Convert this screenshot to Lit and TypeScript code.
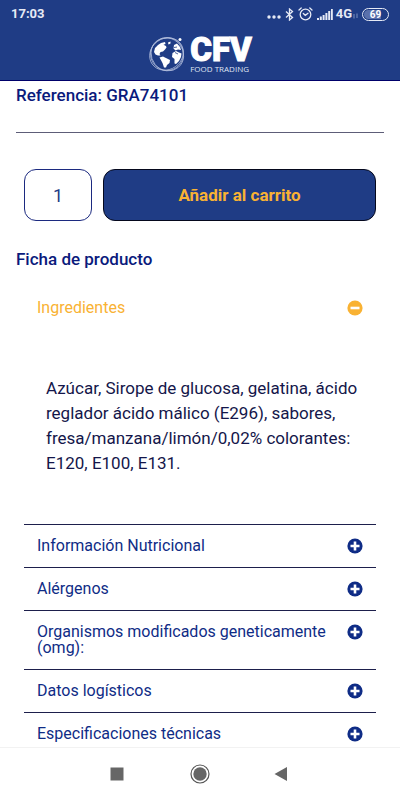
import { LitElement, html, css, svg, nothing } from "lit";
import { customElement, state } from "lit/decorators.js";
import { classMap } from "lit/directives/class-map.js";

interface Section {
  title: string;
  body: string;
}

const SECTIONS: Section[] = [
  {
    title: "Ingredientes",
    body: "Azúcar, Sirope de glucosa, gelatina, ácido reglador ácido málico (E296), sabores, fresa/manzana/limón/0,02% colorantes: E120, E100, E131.",
  },
  { title: "Información Nutricional", body: "" },
  { title: "Alérgenos", body: "" },
  { title: "Organismos modificados geneticamente (omg):", body: "" },
  { title: "Datos logísticos", body: "" },
  { title: "Especificaciones técnicas", body: "" },
];

@customElement("status-bar")
class StatusBar extends LitElement {
  static styles = css`
    :host {
      display: flex;
      align-items: center;
      justify-content: space-between;
      height: 28px;
      padding: 0 11px;
      color: #e6eaf5;
      font: 700 13px/16px Roboto, sans-serif;
    }
    .icons {
      display: flex;
      align-items: center;
    }
    svg {
      display: block;
    }
    .dots {
      margin-right: 4px;
    }
    .bt,
    .alarm {
      margin-right: 4px;
    }
    .signal {
      margin-right: 3px;
    }
    .data {
      margin: 4px 4px 0 1px;
    }
    .battery {
      box-sizing: border-box;
      width: 27px;
      height: 13px;
      padding: 1px;
      border: 1px solid #e6eaf5;
      border-radius: 7px;
    }
    .level {
      display: block;
      height: 9px;
      border-radius: 5px;
      background: linear-gradient(90deg, #5a70ab 75%, transparent 75%);
      color: #fff;
      font-size: 10px;
      line-height: 9px;
      text-align: center;
    }
  `;

  render() {
    return html`
      <span>17:03</span>
      <div class="icons">
        <svg class="dots" width="14" height="12" viewBox="0 0 14 12" fill="#e6eaf5">
          <circle cx="2" cy="9" r="1.7" /><circle cx="7" cy="9" r="1.7" /><circle cx="12" cy="9" r="1.7" />
        </svg>
        <svg class="bt" width="9" height="13" viewBox="0 0 9 13" fill="none" stroke="#e6eaf5" stroke-width="1.3">
          <path d="M1 3.5 7.5 9.5 4.5 12V1L7.5 3.5 1 9.5" />
        </svg>
        <svg class="alarm" width="15" height="14" viewBox="0 0 15 14" fill="none" stroke="#e6eaf5" stroke-width="1.3" stroke-linecap="round">
          <circle cx="7.5" cy="7.5" r="5.3" />
          <path d="M1 3 3.2 1M14 3 11.800 1M5.300 6.500 7.300 8.300 10 6.300" />
        </svg>
        <svg class="signal" width="16" height="12" viewBox="0 0 16 12" fill="#e6eaf5">
          <path d="M0 10h2v2H0zM2.800 8.500h2V12h-2zM5.600 7h2v5h-2zM8.400 5h2v7h-2zM11.200 3h2v9h-2zM14 1h1.800v11H14z" />
        </svg>
        <span>4G</span>
        <svg class="data" width="5" height="6" viewBox="0 0 5 6" fill="none" stroke="#7f91c0">
          <path d="M1 5.500V1M4 .5V5" />
        </svg>
        <span class="battery"><span class="level">69</span></span>
      </div>
    `;
  }
}

@customElement("brand-logo")
class BrandLogo extends LitElement {
  static styles = css`
    :host {
      display: flex;
      align-items: center;
      gap: 4px;
      color: #fff;
      font-family: Roboto, sans-serif;
    }
    svg {
      display: block;
    }
    .name {
      display: block;
      font-size: 33px;
      font-weight: 900;
      line-height: 28px;
      -webkit-text-stroke: 1px #fff;
    }
    .tag {
      display: block;
      font: 400 8px/9px "Open Sans", sans-serif;
      color: #dfe4f2;
    }
  `;

  render() {
    return html`
      <svg width="38" height="38" viewBox="0 0 38 38" role="img" aria-label="CFV">
        ${svg`
          <g fill="none" stroke="#b9c4e0" stroke-width=".7">
            <circle cx="19" cy="19" r="16.500" />
            <ellipse cx="18.500" cy="19" rx="17.500" ry="15.500" transform="rotate(-35 18.500 19)" />
            <ellipse cx="19.500" cy="19" rx="17" ry="15.800" transform="rotate(50 19 19)" />
          </g>
          <circle cx="32" cy="4.500" r="1.500" fill="#fff" />
          <g fill="#fff">
            <path d="M6 17 7 13 10 10 13 8 17 7 17.500 9 15.500 9.800 18 11 18.500 12.500 17 14.500 15 16.500 12.500 17 11.500 19 12.500 20.500 10 20.500 7.500 19.500z" />
            <path d="M11.500 22.500 15 21.500 18 23 22 25 21.500 28 19 30 18 32.500 16 32.500 14.500 28z" />
            <path d="M20 7.500 22.500 6.500 22.500 8.500 20.500 9.500z" />
            <path d="M26 10 29 8.500 32 12 33 15 30 14.500 27.500 15.500 25.500 13.500z" />
            <path d="M24.500 18 28 16 31 17.500 33.500 18.500 33 22 31 26 28 29 26.500 28.500 26.500 24 24 22z" />
          </g>
          <path d="M26 12.500 29 12M27 17.500 30 19" stroke="#1f3c85" stroke-width=".8" />
        `}
      </svg>
      <div>
        <span class="name">CFV</span>
        <span class="tag">FOOD TRADING</span>
      </div>
    `;
  }
}

@customElement("product-accordion")
class ProductAccordion extends LitElement {
  @state() private open = new Set<number>([0]);

  static styles = css`
    :host {
      display: block;
      padding: 0 8px;
    }
    .item + .item {
      border-top: 1px solid #1d1f4c;
    }
    h3 {
      margin: 0;
    }
    .head {
      display: flex;
      align-items: flex-start;
      justify-content: space-between;
      gap: 16px;
      width: 100%;
      margin: 0;
      padding: 13px;
      border: 0;
      background: none;
      color: #0f2c86;
      font: 400 16px/16px Roboto, sans-serif;
      text-align: left;
      cursor: pointer;
    }
    .active {
      color: #f9b233;
    }
    .head svg {
      flex: none;
      display: block;
    }
    .body {
      margin: 0;
      padding: 47px 16px 48px 22px;
      color: #14164a;
      font-size: 17px;
      line-height: 25px;
    }
  `;

  private toggle(i: number) {
    const next = new Set(this.open);
    if (!next.delete(i)) next.add(i);
    this.open = next;
  }

  render() {
    return SECTIONS.map((s, i) => {
      const open = this.open.has(i);
      return html`
        <div class="item">
          <h3>
            <button
              class=${classMap({ head: true, active: open })}
              aria-expanded=${open ? "true" : "false"}
              @click=${() => this.toggle(i)}
            >
              <span>${s.title}</span>
              <svg width="16" height="16" viewBox="0 0 16 16" aria-hidden="true">
                <circle cx="8" cy="8" r="7.600" fill="currentColor" />
                <path d=${open ? "M3.500 8h9" : "M3.500 8h9M8 3.500v9"} stroke="#fff" stroke-width="2.600" />
              </svg>
            </button>
          </h3>
          ${open && s.body ? html`<p class="body">${s.body}</p>` : nothing}
        </div>
      `;
    });
  }
}

@customElement("system-nav")
class SystemNav extends LitElement {
  static styles = css`
    :host {
      display: flex;
      justify-content: center;
      gap: 58px;
      padding: 14px 0;
      border-top: 1px solid #f2f2f2;
      background: #fff;
    }
    button {
      padding: 0;
      border: 0;
      background: none;
    }
    svg {
      display: block;
    }
  `;

  render() {
    return html`
      <button aria-label="Recientes">
        <svg width="24" height="24" viewBox="0 0 24 24"><path d="M4.500 5.500h13v13h-13z" fill="#666" /></svg>
      </button>
      <button aria-label="Inicio">
        <svg width="24" height="24" viewBox="0 0 24 24">
          <circle cx="12" cy="12" r="9" fill="none" stroke="#555" stroke-width="1.200" />
          <circle cx="12" cy="12" r="6.700" fill="#666" />
        </svg>
      </button>
      <button aria-label="Atrás">
        <svg width="24" height="24" viewBox="0 0 24 24"><path d="M4.500 12 17 5v14z" fill="#666" /></svg>
      </button>
    `;
  }
}

@customElement("app-root")
class AppRoot extends LitElement {
  static styles = css`
    :host {
      display: flex;
      flex-direction: column;
      height: 100vh;
      background: #fff;
      color: #0f1f7c;
      font-family: Roboto, sans-serif;
    }
    header {
      flex: none;
      background: #1f3c85;
      border-bottom: 1px solid #00006a;
    }
    brand-logo {
      justify-content: center;
      height: 52px;
    }
    main {
      flex: 1;
      min-height: 0;
      overflow: hidden;
      padding: 4px 16px 0;
    }
    h2 {
      margin: 0;
      color: #0a1a7c;
      font-size: 17px;
      font-weight: 500;
      line-height: 20px;
    }
    hr {
      margin: 27px 0 36px;
      border: 0;
      border-top: 1px solid #5d5d78;
    }
    form {
      display: flex;
      gap: 11px;
      margin: 0 0 28px;
      padding: 0 8px;
    }
    input,
    .add {
      box-sizing: border-box;
      height: 52px;
      margin: 0;
      border-radius: 12px;
    }
    input {
      width: 68px;
      padding: 0;
      border: 1px solid #1c2a80;
      background: #fff;
      color: #1f3c85;
      font: 400 18px/24px Roboto, sans-serif;
      text-align: center;
    }
    .add {
      flex: 1;
      border: 1px solid #05081c;
      background: #1f3c85;
      color: #f9b233;
      font: 700 17px/24px Roboto, sans-serif;
    }
    product-accordion {
      margin-top: 18px;
    }
    system-nav {
      flex: none;
    }
  `;

  render() {
    return html`
      <header>
        <status-bar></status-bar>
        <brand-logo></brand-logo>
      </header>
      <main>
        <h2>Referencia: GRA74101</h2>
        <hr />
        <form @submit=${(e: Event) => e.preventDefault()}>
          <input type="text" inputmode="numeric" aria-label="Cantidad" value="1" />
          <button class="add">Añadir al carrito</button>
        </form>
        <h2>Ficha de producto</h2>
        <product-accordion></product-accordion>
      </main>
      <system-nav></system-nav>
    `;
  }
}
